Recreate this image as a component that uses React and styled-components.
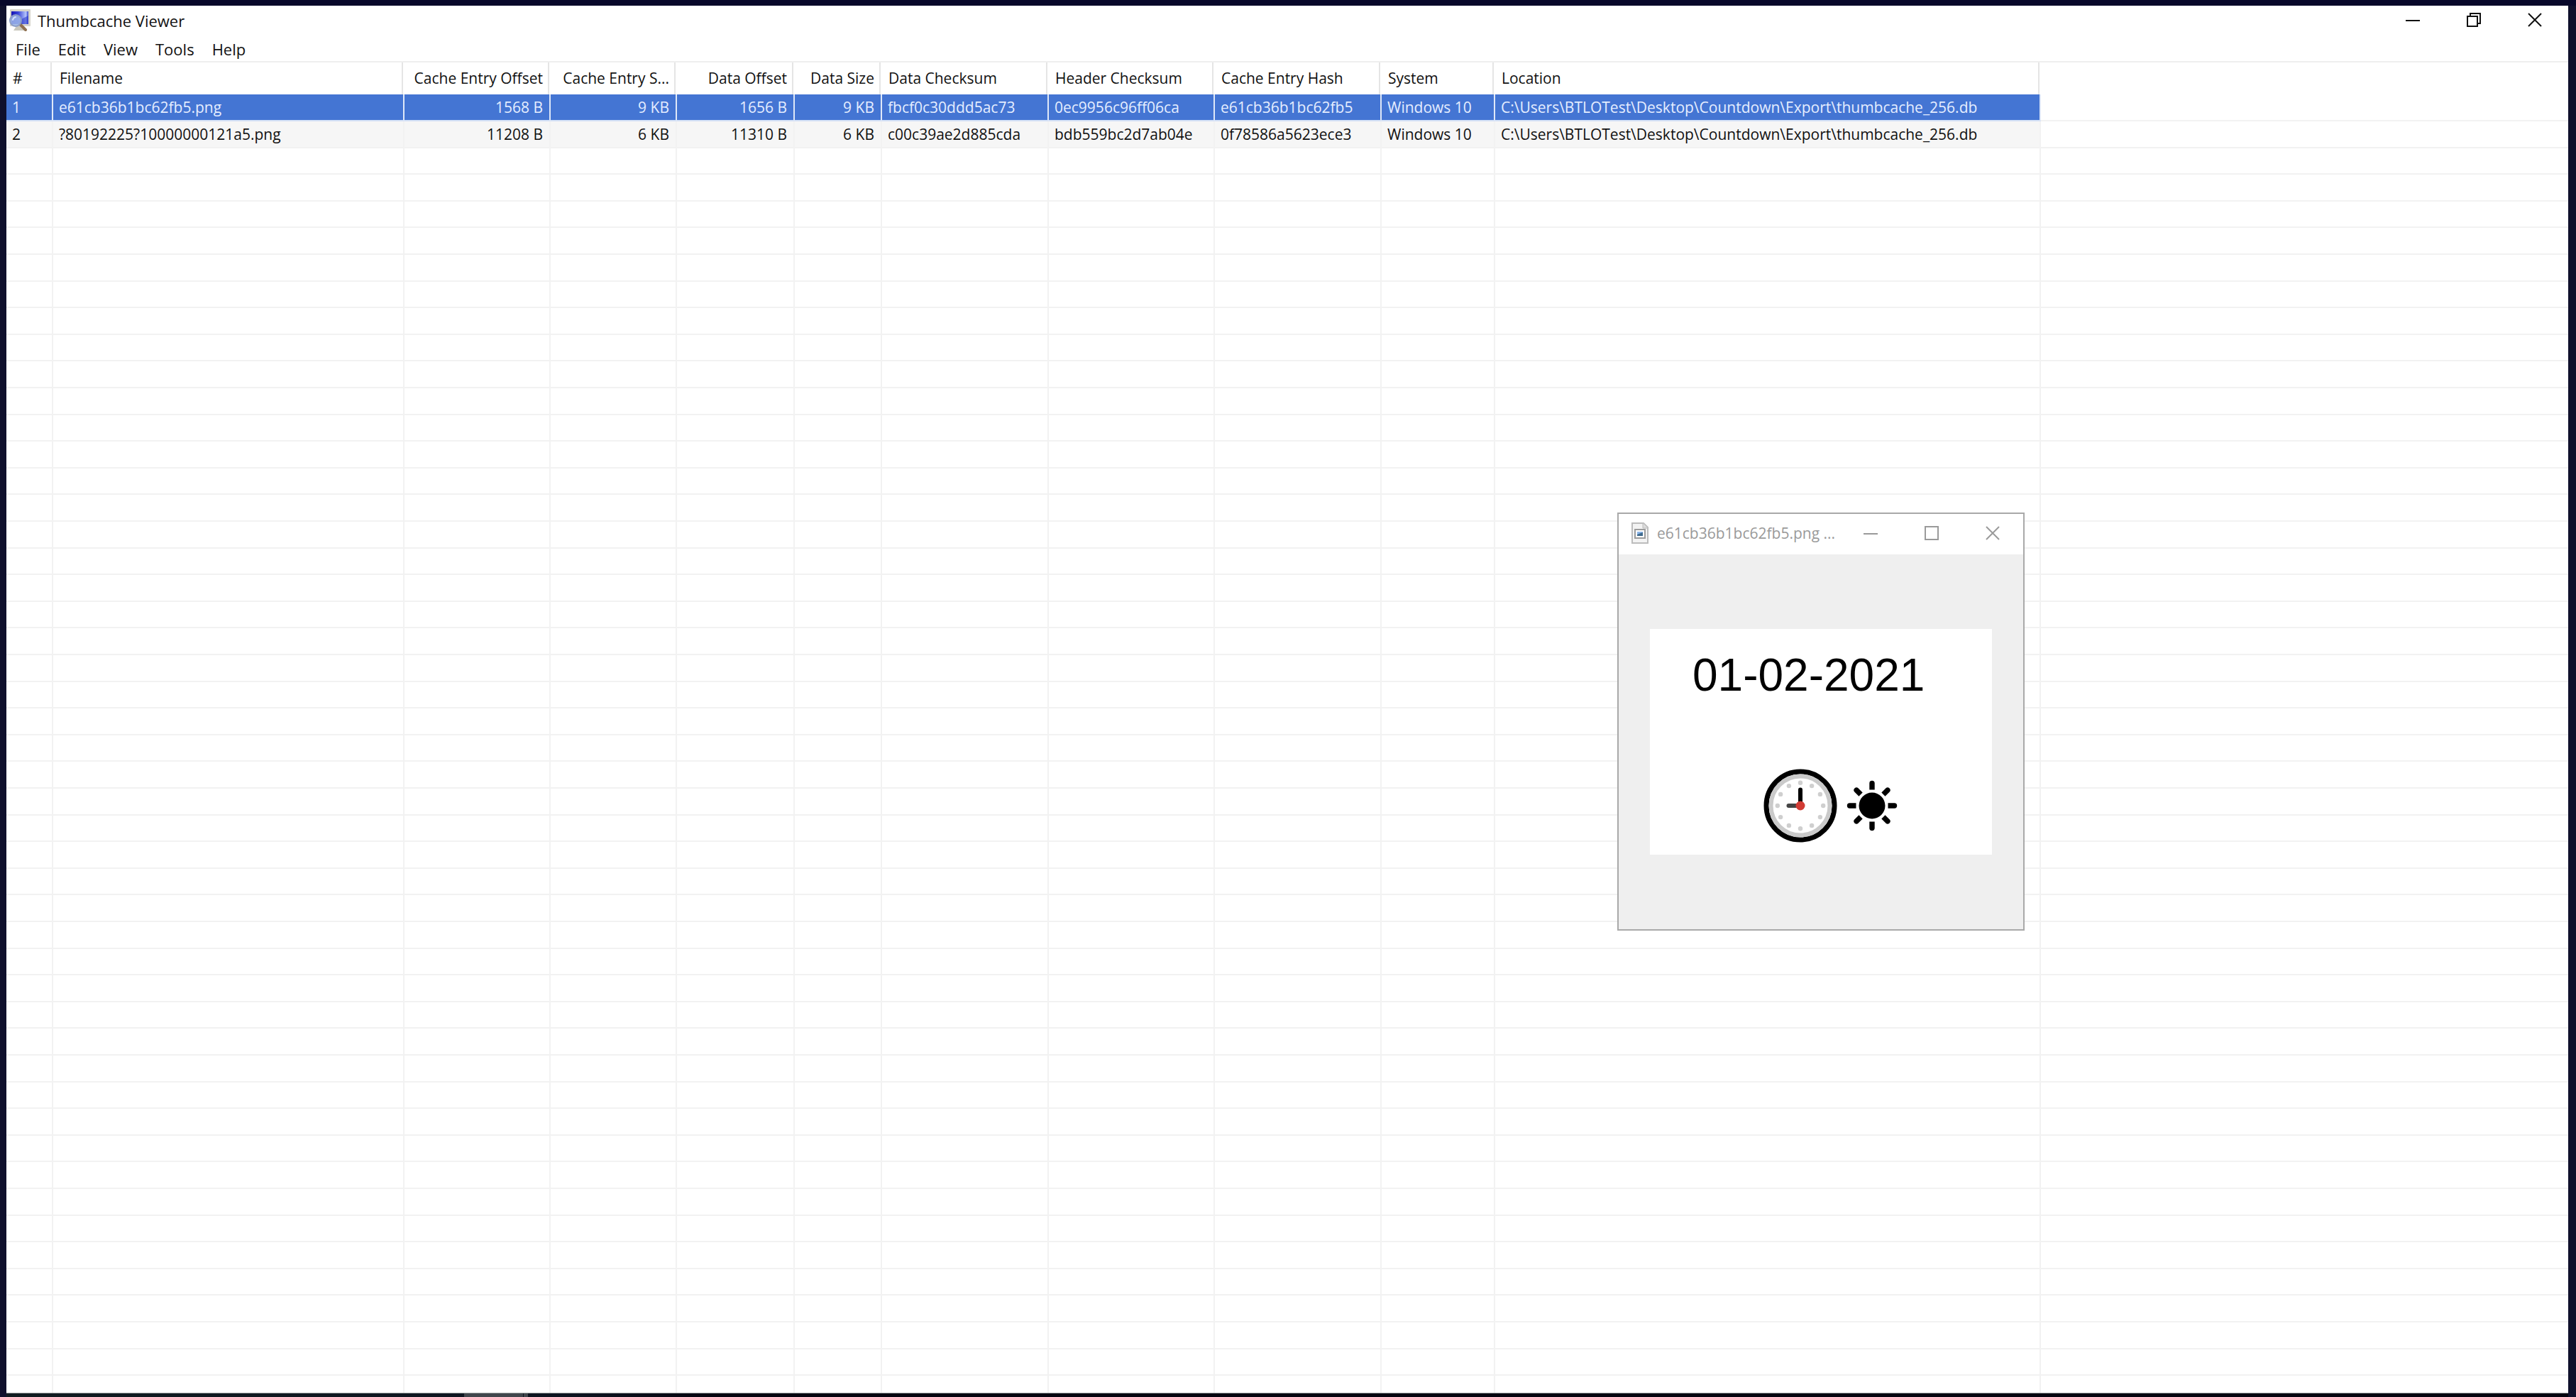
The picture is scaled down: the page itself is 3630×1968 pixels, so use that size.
import React from "react";
import styled, { createGlobalStyle, css } from "styled-components";

const UI_FONT = `"Open Sans", "Noto Sans", sans-serif`;
const LINE = "#f2f2f2";

const GlobalStyle = createGlobalStyle`
  * { box-sizing: border-box; }
  html, body { margin: 0; height: 100%; }
  #root { height: 100%; }
  body { background: #0f102c; overflow: hidden; }
`;

const Desktop = styled.div`
  position: relative;
  display: flex;
  flex-direction: column;
  height: 100vh;
  padding: 0 11px 0 9px;
  border-top: 8px solid #07072a;
  background: #0f102c;
  font-family: ${UI_FONT};
  font-size: 22px;
  line-height: 30px;
  color: #111;
`;

const Window = styled.main`
  flex: 1;
  min-height: 0;
  display: flex;
  flex-direction: column;
  overflow: hidden;
  background: #fff;
`;

const TitleBar = styled.header`
  display: flex;
  align-items: center;
  height: 40px;
  padding: 0 4px;
`;

const Title = styled.h1`
  flex: 1;
  min-width: 0;
  margin: 0 0 0 9px;
  padding-top: 2px;
  font-size: 22px;
  font-weight: 400;
  white-space: nowrap;
`;

const PlainButton = styled.button`
  display: flex;
  align-items: center;
  justify-content: center;
  border: 0;
  padding: 0;
  background: transparent;
  color: inherit;
  font: inherit;
`;

const CaptionButton = styled(PlainButton)`
  width: 86px;
  height: 38px;
`;

const MenuBar = styled.nav`
  display: flex;
  gap: 1px;
  height: 38px;
  padding: 3px 0 0 1px;
`;

const MenuButton = styled(PlainButton)`
  padding: 0 12px;
`;

const ListArea = styled.div`
  flex: 1;
  min-height: 0;
  overflow: hidden;
  border-top: 2px solid #efefef;
`;

const Table = styled.table`
  width: 100%;
  table-layout: fixed;
  border-collapse: separate;
  border-spacing: 0;
  font-size: 21px;
`;

const Col = styled.col`
  width: ${(p) => (p.$width ? `${p.$width}px` : "auto")};
`;

const clipped = css`
  overflow: hidden;
  text-overflow: ellipsis;
  white-space: nowrap;
  text-align: ${(p) => (p.$end ? "right" : "left")};
`;

const HeadCell = styled.th`
  ${clipped}
  height: 45px;
  padding: 0 11px 2px 9px;
  font-weight: 400;
  background: ${(p) =>
    p.$filler ? "none" : "linear-gradient(#e5e5e5, #e5e5e5) right 2px top / 2px 100% no-repeat"};
`;

const Cell = styled.td`
  ${clipped}
  height: inherit;
  padding: 0 9px 0 8px;
  border-bottom: 2px solid ${LINE};
  border-right: ${(p) => (p.$filler ? 0 : 2)}px solid ${LINE};
`;

const Row = styled.tr`
  height: 38px;
  &:nth-child(5n + 3),
  &:nth-child(5n + 5) {
    height: 37px;
  }
  ${(p) =>
    p.$tone === "selected" &&
    css`
      color: #e4edff;
      ${Cell}:not(:last-child) {
        background: #4475d3;
        border-bottom-color: #d5e1f6;
        border-right-color: #dfe8f8;
        background-clip: padding-box;
      }
    `}
  ${(p) =>
    p.$tone === "sorted" &&
    css`
      ${Cell}:not(:last-child) { background: #f6f6f6; }
    `}
`;

const Taskbar = styled.footer`
  display: flex;
  height: 6px;
  padding-left: 645px;
  border-top: 1px solid #8d9494;
  background: linear-gradient(90deg, #101b20, #0d1420 800px, #04040f 1000px);
`;

const TaskbarItem = styled.div`
  width: ${(p) => p.$width}px;
  margin-right: 1px;
  background: #40464c;
`;

const Viewer = styled.section`
  position: absolute;
  top: 714px;
  left: 2279px;
  width: 574px;
  border: 2px solid #a9a9a9;
  background: #efefef;
`;

const ViewerBar = styled.header`
  display: flex;
  align-items: center;
  height: 57px;
  padding: 0 0 3px 18px;
  background: #fff;
  color: #9a9a9a;
`;

const ViewerTitle = styled.h2`
  flex: 1;
  min-width: 0;
  margin: 0 0 0 12px;
  font-size: 21px;
  font-weight: 400;
  white-space: nowrap;
`;

const ViewerBody = styled.div`
  padding: 105px 44px;
`;

const Picture = styled.figure`
  display: flex;
  flex-direction: column;
  justify-content: space-between;
  height: 318px;
  margin: 0;
  padding: 28px 0 17px 60px;
  background: #fff;
  color: #000;
`;

const DateText = styled.figcaption`
  font-family: "Liberation Sans", Arial, sans-serif;
  font-size: 64px;
  line-height: 74px;
`;

const Glyphs = styled.div`
  display: flex;
  align-items: center;
  gap: 13px;
  padding-left: 100px;
`;

const AppIcon = () => (
  <svg width="31" height="32" viewBox="0 0 31 32" aria-hidden="true">
    <defs>
      <linearGradient id="screen" x1="0" y1="0" x2="1" y2="0">
        <stop offset="0" stopColor="#1512b4" />
        <stop offset="0.4" stopColor="#3a45d8" />
        <stop offset="0.85" stopColor="#b4c4fb" />
        <stop offset="1" stopColor="#3846cf" />
      </linearGradient>
    </defs>
    <rect x="1" y="1" width="29" height="24" rx="1" fill="#d6d4cb" />
    <rect x="3" y="4" width="24" height="18" fill="url(#screen)" />
    <path d="M3 22L27 10v12z" fill="#2232c8" fillOpacity="0.55" />
    <path d="M10 25h10l4 6H6z" fill="#c9c7bc" />
    <path d="M15 22l8 8" stroke="#8f7050" strokeWidth="4" strokeLinecap="round" />
    <circle cx="9" cy="17" r="8" fill="#9fb9ea" fillOpacity="0.85" stroke="#8a9cc6" strokeWidth="2" />
    <path d="M5 16a5 5 0 0 1 4-4" fill="none" stroke="#d3e0fa" strokeWidth="2" strokeLinecap="round" />
  </svg>
);

const FileIcon = () => (
  <svg width="24" height="30" viewBox="0 0 24 30" aria-hidden="true">
    <path d="M1 1h16l6 6v22H1z" fill="#f3f3f3" stroke="#bcbcbc" strokeWidth="2" />
    <path d="M16 1v7h7" fill="#ddd" stroke="#bcbcbc" />
    <rect x="5" y="10" width="14" height="12" fill="#fff" stroke="#9c9c9c" strokeWidth="2" />
    <rect x="8" y="13" width="8" height="6" fill="#8ab4e8" />
    <path d="M8 19v-2l5-2 3-1v5z" fill="#3f6a8c" />
  </svg>
);

const Caption = ({ kind }) => (
  <svg width="20" height="20" viewBox="0 0 20 20" fill="none" stroke="currentColor" strokeWidth="2" aria-hidden="true">
    {kind === "minimize" && <path d="M0 11h20" />}
    {kind === "maximize" && <path d="M1 1h18v18H1z" />}
    {kind === "restore" && <path d="M1 5h14v14H1zM5 5V1h14v14h-4" />}
    {kind === "close" && <path d="M1 1l18 18M19 1L1 19" />}
  </svg>
);

const Clock = () => (
  <svg width="104" height="104" viewBox="-52 -52 104 104" aria-hidden="true">
    <circle r="48" fill="#fff" stroke="#000" strokeWidth="7" />
    <circle r="41.5" fill="none" stroke="#cacaca" strokeWidth="6" />
    {Array.from({ length: 12 }, (_, i) => (
      <circle
        key={i}
        r="3.2"
        fill="#cfcfcf"
        cx={32.2 * Math.cos((i * Math.PI) / 6)}
        cy={32.2 * Math.sin((i * Math.PI) / 6)}
      />
    ))}
    <path d="M0 0H-16.5" stroke="#444" strokeWidth="6" strokeLinecap="round" />
    <path d="M0 0V-22.5" stroke="#000" strokeWidth="6" strokeLinecap="round" />
    <circle r="6.5" fill="#d13b34" />
  </svg>
);

const Sun = () => (
  <svg width="72" height="72" viewBox="-36 -36 72 72" aria-hidden="true">
    <circle r="18.5" fill="#000" />
    {Array.from({ length: 8 }, (_, i) => (
      <path
        key={i}
        d={i % 2 ? "M22.5 -3.7H31a3.7 3.7 0 0 1 0 7.4H22.5z" : "M22.5 -3.7H31.5a3.7 3.7 0 0 1 0 7.4H22.5z"}
        fill="#000"
        transform={`rotate(${i * 45})`}
      />
    ))}
  </svg>
);

const COLUMNS = [
  { label: "#", width: 66 },
  { label: "Filename", width: 495 },
  { label: "Cache Entry Offset", width: 206, end: true },
  { label: "Cache Entry Size", shown: "Cache Entry S...", width: 178, end: true },
  { label: "Data Offset", width: 166, end: true },
  { label: "Data Size", width: 123, end: true },
  { label: "Data Checksum", width: 235 },
  { label: "Header Checksum", width: 234 },
  { label: "Cache Entry Hash", width: 235 },
  { label: "System", width: 160 },
  { label: "Location", width: 769 },
];

const LOCATION = "C:\\Users\\BTLOTest\\Desktop\\Countdown\\Export\\thumbcache_256.db";

const ENTRIES = [
  ["1", "e61cb36b1bc62fb5.png", "1568 B", "9 KB", "1656 B", "9 KB", "fbcf0c30ddd5ac73", "0ec9956c96ff06ca", "e61cb36b1bc62fb5", "Windows 10", LOCATION],
  ["2", "?80192225?10000000121a5.png", "11208 B", "6 KB", "11310 B", "6 KB", "c00c39ae2d885cda", "bdb559bc2d7ab04e", "0f78586a5623ece3", "Windows 10", LOCATION],
];

const EMPTY_ROWS = 47;
const TONES = ["selected", "sorted"];

export default function App() {
  return (
    <>
      <GlobalStyle />
      <Desktop>
        <Window>
          <TitleBar>
            <AppIcon />
            <Title>Thumbcache Viewer</Title>
            <CaptionButton aria-label="Minimize"><Caption kind="minimize" /></CaptionButton>
            <CaptionButton aria-label="Restore"><Caption kind="restore" /></CaptionButton>
            <CaptionButton aria-label="Close"><Caption kind="close" /></CaptionButton>
          </TitleBar>
          <MenuBar>
            {["File", "Edit", "View", "Tools", "Help"].map((m) => (
              <MenuButton key={m}>{m}</MenuButton>
            ))}
          </MenuBar>
          <ListArea>
            <Table>
              <colgroup>
                {COLUMNS.map((c) => <Col key={c.label} $width={c.width} />)}
                <Col />
              </colgroup>
              <thead>
                <tr>
                  {COLUMNS.map((c) => (
                    <HeadCell key={c.label} scope="col" $end={c.end}>{c.shown || c.label}</HeadCell>
                  ))}
                  <HeadCell as="td" $filler />
                </tr>
              </thead>
              <tbody>
                {ENTRIES.map((entry, r) => (
                  <Row key={r} $tone={TONES[r]}>
                    {entry.map((value, i) => (
                      <Cell key={i} $end={COLUMNS[i].end}>{value}</Cell>
                    ))}
                    <Cell $filler />
                  </Row>
                ))}
                {Array.from({ length: EMPTY_ROWS }, (_, r) => (
                  <Row key={`empty-${r}`}>
                    {COLUMNS.map((c) => <Cell key={c.label} />)}
                    <Cell $filler />
                  </Row>
                ))}
              </tbody>
            </Table>
          </ListArea>
        </Window>
        <Taskbar>
          <TaskbarItem $width={83} />
          <TaskbarItem $width={6} />
        </Taskbar>
        <Viewer aria-label="Image preview">
          <ViewerBar>
            <FileIcon />
            <ViewerTitle>e61cb36b1bc62fb5.png ...</ViewerTitle>
            <CaptionButton aria-label="Minimize preview"><Caption kind="minimize" /></CaptionButton>
            <CaptionButton aria-label="Maximize preview"><Caption kind="maximize" /></CaptionButton>
            <CaptionButton aria-label="Close preview"><Caption kind="close" /></CaptionButton>
          </ViewerBar>
          <ViewerBody>
            <Picture>
              <DateText>01-02-2021</DateText>
              <Glyphs>
                <Clock />
                <Sun />
              </Glyphs>
            </Picture>
          </ViewerBody>
        </Viewer>
      </Desktop>
    </>
  );
}
